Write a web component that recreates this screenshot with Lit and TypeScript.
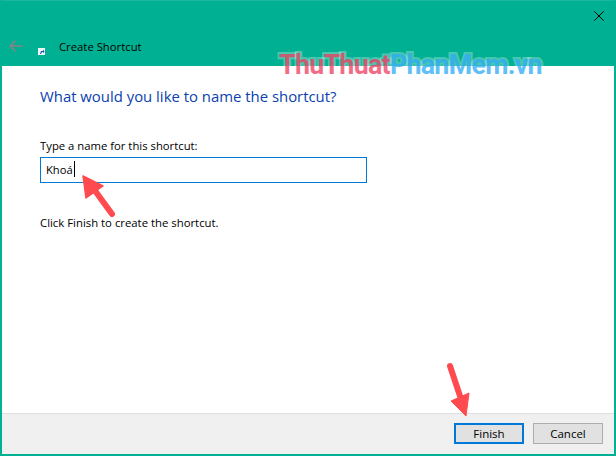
import { LitElement, html, css } from "lit";
import { customElement } from "lit/decorators.js";

@customElement("app-root")
export class AppRoot extends LitElement {
  static styles = css`
    :host { display: block; width: 616px; height: 456px; position: relative; overflow: hidden; font-family: "Open Sans", "Noto Sans", sans-serif; }
    .frame { width: 616px; height: 456px; box-sizing: border-box; background: #00b092; border: 2px solid #00b092; border-top-color: #1ab79c; border-top-width: 1px; display: flex; flex-direction: column; }
    .head { height: 65px; flex: none; display: flex; flex-direction: column; }
    .close-row { height: 31px; box-sizing: border-box; display: flex; justify-content: flex-end; align-items: flex-start; padding: 10px 10px 0 0; }
    .close { display: block; width: 10px; height: 10px; }
    .title-row { display: flex; align-items: center; height: 28px; padding-left: 7px; }
    .back { display: block; width: 14px; height: 12px; }
    .app-icon { display: block; width: 7px; height: 7px; margin-left: 15px; margin-top: 10px; }
    .title { font-size: 11.3px; color: #000; margin-left: 14px; }
    .body { flex: 1; background: #fff; padding: 19px 38px 0; display: flex; flex-direction: column; }
    h1 { margin: 0; font-size: 14.9px; line-height: 22px; font-weight: 400; color: #0a3fb0; }
    .label { margin-top: 31px; font-size: 11.3px; line-height: 16px; color: #000; }
    .input { margin-top: 3px; box-sizing: border-box; width: 327px; height: 26px; border: 1px solid #0078d7; padding: 0 0 2px 5px; display: flex; align-items: center; font-size: 11.2px; color: #000; }
    .caret { display: inline-block; width: 1px; height: 16px; background: #000; margin-left: 1px; }
    .note { margin-top: 32px; font-size: 11.35px; line-height: 16px; color: #000; }
    .foot { height: 41px; flex: none; box-sizing: border-box; background: #f0f0f0; border-top: 1px solid #dfdfdf; display: flex; justify-content: flex-end; gap: 9px; padding: 9px 11px 0 0; }
    .btn { box-sizing: border-box; width: 70px; height: 21px; background: #e1e1e1; border: 1px solid #adadad; display: flex; align-items: center; justify-content: center; font-size: 11.5px; color: #000; }
    .btn.primary { border: 2px solid #0078d7; }
    .overlay { position: absolute; left: 0; top: 0; width: 616px; height: 456px; pointer-events: none; }
    .wm { position: absolute; left: 279px; top: 49px; font-family: "Roboto", "Liberation Sans", sans-serif; font-weight: 700; font-size: 26.8px; line-height: 32px; letter-spacing: -0.72px; white-space: nowrap; display: flex; }
    .wm span { paint-order: stroke; -webkit-text-stroke: 4px rgba(255,255,255,0.3); }
    .red { color: rgba(238,60,95,0.75); }
    .blue { color: rgba(45,170,245,0.75); }
  `;

  render() {
    return html`
      <div class="frame">
        <div class="head">
          <div class="close-row">
            <svg class="close" viewBox="0 0 10 10"><path d="M.3.300l9.400 9.400M9.700.300L.3 9.700" stroke="#000" stroke-width="1" fill="none"/></svg>
          </div>
          <div class="title-row">
            <svg class="back" viewBox="0 0 14 12"><path d="M6.500.8L1.300 6l5.200 5.200M1.300 6H13.500" stroke="#8c8088" stroke-width="1.600" fill="none"/></svg>
            <svg class="app-icon" viewBox="0 0 7 7"><rect width="7" height="7" fill="#f1f4f8"/><path d="M2 6l1-3h2V1.500l1.500 2L5 5.200V4H4L3 6z" fill="#1d4fb0"/></svg>
            <span class="title">Create Shortcut</span>
          </div>
        </div>
        <div class="body">
          <h1>What would you like to name the shortcut?</h1>
          <div class="label">Type a name for this shortcut:</div>
          <div class="input">Khoá<span class="caret"></span></div>
          <div class="note">Click Finish to create the shortcut.</div>
        </div>
        <div class="foot">
          <div class="btn primary">Finish</div>
          <div class="btn">Cancel</div>
        </div>
      </div>
      <div class="wm"><span class="red">ThuThuat</span><span class="blue">PhanMem.vn</span></div>
      <svg class="overlay" viewBox="0 0 616 456">
        <path d="M112 214L93 188" stroke="#ff4b4f" stroke-width="6" stroke-linecap="round" fill="none"/>
        <path d="M83 176L103 186L86 198Z" fill="#ff4b4f" stroke="#ff4b4f" stroke-width="1.500" stroke-linejoin="round"/>
        <path d="M450 366L462 402" stroke="#ff4b4f" stroke-width="6" stroke-linecap="round" fill="none"/>
        <path d="M451 401L469 393L466 416Z" fill="#ff4b4f" stroke="#ff4b4f" stroke-width="1" stroke-linejoin="round"/>
      </svg>
    `;
  }
}
